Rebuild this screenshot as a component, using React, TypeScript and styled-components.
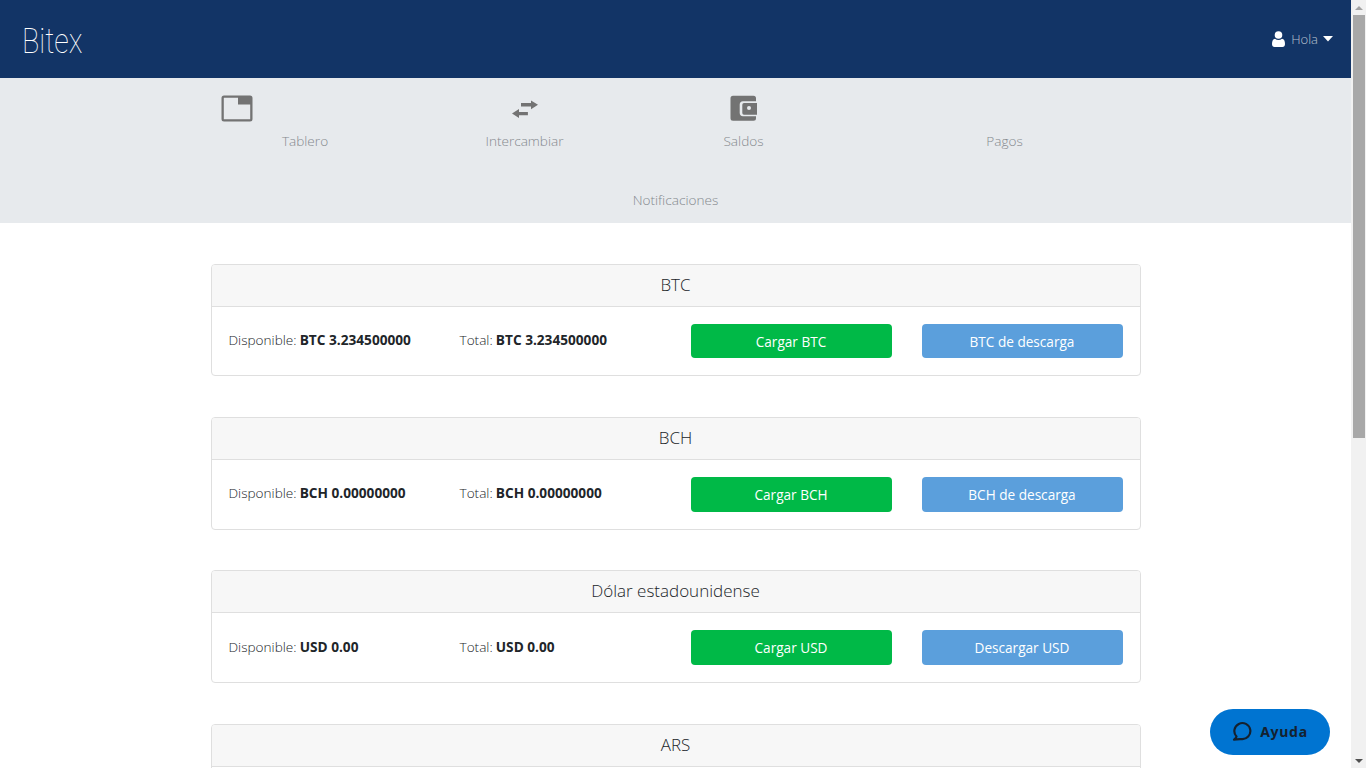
import React from "react";
import styled, { createGlobalStyle } from "styled-components";

const Global = createGlobalStyle`
  body { margin: 0; background: #fff; font-family: "Open Sans", "Liberation Sans", sans-serif; color: #212529; }
  * { box-sizing: border-box; }
`;

const Page = styled.div`
  width: 1351px;
  min-height: 1340px;
`;

const Header = styled.header`
  height: 78px;
  background: #123466;
  display: flex;
  align-items: center;
  justify-content: space-between;
  padding: 0 18px 0 22px;
`;

const Brand = styled.div`
  font-family: "Roboto", "Lato", sans-serif;
  font-weight: 100;
  font-size: 35px;
  line-height: 40px;
  color: #fff;
  margin-top: 5px;
  transform: scaleX(0.82);
  transform-origin: left center;
`;

const UserMenu = styled.div`
  display: flex;
  align-items: center;
  color: rgba(255, 255, 255, 0.7);
  font-size: 13px;
  font-weight: 300;
  margin-top: -1px;
`;

const UserName = styled.span`
  margin: 0 5px 0 6px;
`;

const Nav = styled.nav`
  background: #e7eaed;
  height: 145px;
`;

const NavGrid = styled.div`
  width: 930px;
  margin: 0 auto;
  display: grid;
  grid-template-columns: 189px 188px 188px 272px;
  column-gap: 31px;
  grid-template-rows: 85px 60px;
`;

const NavItem = styled.a<{ $full?: boolean }>`
  display: block;
  grid-column: ${(p) => (p.$full ? "1 / -1" : "auto")};
  color: #85898e;
  font-size: 13.6px;
  font-weight: 300;
  text-align: center;
`;

const NavIcon = styled.div<{ $start?: boolean }>`
  height: 33px;
  margin-top: 17px;
  display: flex;
  justify-content: ${(p) => (p.$start ? "flex-start" : "center")};
  padding-left: ${(p) => (p.$start ? "10px" : "0")};
`;

const NavLabel = styled.div<{ $top?: number }>`
  line-height: 18px;
  margin-top: ${(p) => p.$top ?? 4}px;
`;

const Main = styled.main`
  width: 930px;
  margin: 40.7px auto 0;
  display: flex;
  flex-direction: column;
  gap: 40.85px;
`;

const Card = styled.section`
  border: 1px solid #dfdfdf;
  border-radius: 4px;
  overflow: hidden;
`;

const CardHeader = styled.div`
  height: 42px;
  background: #f7f7f7;
  border-bottom: 1px solid #dfdfdf;
  text-align: center;
  font-size: 17px;
  font-weight: 300;
  line-height: 40px;
  color: #212529;
`;

const CardBody = styled.div`
  padding: 17px;
  display: grid;
  grid-template-columns: repeat(4, 201px);
  column-gap: 30px;
  align-items: center;
`;

const Stat = styled.div`
  font-size: 13.6px;
  font-weight: 300;
  color: #212529;
  margin-top: -3px;
  white-space: nowrap;
`;

const Value = styled.strong`
  font-weight: 700;
  font-size: 13.65px;
  margin-left: -0.4px;
`;

const Button = styled.a<{ $kind: "green" | "blue" }>`
  display: block;
  height: 34.5px;
  line-height: 35.5px;
  border-radius: 4px;
  text-align: center;
  font-size: 13.6px;
  color: #fff;
  background: ${(p) => (p.$kind === "green" ? "#00b947" : "#5b9fdc")};
`;

const Help = styled.div`
  position: fixed;
  left: 1210px;
  top: 709px;
  width: 120px;
  height: 46px;
  padding-bottom: 2px;
  border-radius: 23px;
  background: #0074d1;
  color: #14212f;
  display: flex;
  align-items: center;
  justify-content: center;
  gap: 8px;
  font-family: "Noto Sans", "Open Sans", sans-serif;
  font-weight: 700;
  font-size: 14px;
  letter-spacing: 0.7px;
`;

const Scrollbar = styled.aside`
  position: fixed;
  top: 0;
  right: 0;
  width: 15px;
  height: 768px;
  background: #f1f1f1;
  display: flex;
  flex-direction: column;
`;

const ScrollButton = styled.div<{ $down?: boolean }>`
  height: 15px;
  flex: none;
  display: flex;
  align-items: center;
  justify-content: center;
  &::before {
    content: "";
    width: 0;
    height: 0;
    border-left: 4px solid transparent;
    border-right: 4px solid transparent;
    border-top: ${(p) => (p.$down ? "4px solid #505050" : "none")};
    border-bottom: ${(p) => (p.$down ? "none" : "4px solid #a3a3a3")};
  }
`;

const ScrollThumb = styled.div`
  height: 423px;
  flex: none;
  margin: 0 1px 0 2px;
  background: #a8a8a8;
`;

const ScrollTrack = styled.div`
  flex: 1;
`;

const TableroIcon = () => (
  <svg width="32" height="27" viewBox="0 0 32 27">
    <path fillRule="evenodd" fill="#737373" d="M3 0.5h26a2.5 2.5 0 0 1 2.5 2.5v21a2.5 2.5 0 0 1-2.5 2.5H3A2.5 2.5 0 0 1 0.5 24V3A2.5 2.5 0 0 1 3 0.5ZM2.8 3V24.2H29.2V9.5H17V2.8H3Z" />
  </svg>
);

const ExchangeIcon = () => (
  <svg width="28" height="27" viewBox="0 0 28 27">
    <path fill="#737373" d="M10 8.1H20V5.5L27 9.8L20 14.2V11.6H10Z" />
    <path fill="#737373" d="M16.9 16.9H8V14.1L1 18.5L8 23V20.3H16.9Z" />
  </svg>
);

const WalletIcon = () => (
  <svg width="27" height="27" viewBox="0 0 27 27">
    <path fill="#737373" d="M3 0.7H23.5A2.5 2.5 0 0 1 26 3.2V6.3H13A3.5 3.5 0 0 0 9.7 9.8V17.8A3.5 3.5 0 0 0 13 21.3H26V23.2A2.5 2.5 0 0 1 23.5 25.7H3A2.5 2.5 0 0 1 .5 23.2V3.2A2.5 2.5 0 0 1 3 .7Z" />
    <path fillRule="evenodd" fill="#737373" d="M14 8H27V19.7H14A1.7 1.7 0 0 1 12.3 18V9.7A1.7 1.7 0 0 1 14 8ZM19 11a2 2 0 1 0 0 4a2 2 0 0 0 0-4Z" />
  </svg>
);

const UserIcon = () => (
  <svg width="13" height="16" viewBox="0 0 13 16">
    <circle cx="6.5" cy="4" r="3.8" fill="#fff" />
    <path fill="#fff" d="M0 13c0-3 1-5 3-5.2 1 .8 2.2 1.2 3.5 1.2s2.5-.4 3.5-1.2c2 .2 3 2.2 3 5.2 0 2-1 3-2.5 3h-8C1 16 0 15 0 13Z" />
  </svg>
);

const Caret = () => (
  <svg width="10" height="6" viewBox="0 0 10 6">
    <path fill="#fff" d="M0 0h10L5 5.5Z" />
  </svg>
);

const ChatIcon = () => (
  <svg width="20" height="20" viewBox="0 0 20 20" fill="none">
    <path stroke="#14212f" strokeWidth="2.2" strokeLinecap="round" strokeLinejoin="round" d="M4.5 15.5A8 8 0 1 1 9.5 18c-2 .2-4.5.5-7.5.7 1.2-.8 2.2-1.8 2.5-3.2Z" />
  </svg>
);

type Row = { title: string; code: string; avail: string; load: string; unload: string };

const rows: Row[] = [
  { title: "BTC", code: "BTC", avail: "3.234500000", load: "Cargar BTC", unload: "BTC de descarga" },
  { title: "BCH", code: "BCH", avail: "0.00000000", load: "Cargar BCH", unload: "BCH de descarga" },
  { title: "Dólar estadounidense", code: "USD", avail: "0.00", load: "Cargar USD", unload: "Descargar USD" },
  { title: "ARS", code: "ARS", avail: "0.00", load: "Cargar ARS", unload: "Descargar ARS" },
];

export default function App() {
  return (
    <Page>
      <Global />
      <Header>
        <Brand>Bitex</Brand>
        <UserMenu>
          <UserIcon />
          <UserName>Hola</UserName>
          <Caret />
        </UserMenu>
      </Header>
      <Nav>
        <NavGrid>
          <NavItem>
            <NavIcon $start><TableroIcon /></NavIcon>
            <NavLabel>Tablero</NavLabel>
          </NavItem>
          <NavItem>
            <NavIcon><ExchangeIcon /></NavIcon>
            <NavLabel>Intercambiar</NavLabel>
          </NavItem>
          <NavItem>
            <NavIcon><WalletIcon /></NavIcon>
            <NavLabel>Saldos</NavLabel>
          </NavItem>
          <NavItem>
            <NavIcon />
            <NavLabel>Pagos</NavLabel>
          </NavItem>
          <NavItem $full>
            <NavLabel $top={28}>Notificaciones</NavLabel>
          </NavItem>
        </NavGrid>
      </Nav>
      <Main>
        {rows.map((r) => (
          <Card key={r.code}>
            <CardHeader>{r.title}</CardHeader>
            <CardBody>
              <Stat>Disponible: <Value>{r.code} {r.avail}</Value></Stat>
              <Stat>Total: <Value>{r.code} {r.avail}</Value></Stat>
              <Button $kind="green">{r.load}</Button>
              <Button $kind="blue">{r.unload}</Button>
            </CardBody>
          </Card>
        ))}
      </Main>
      <Help>
        <ChatIcon />
        <span>Ayuda</span>
      </Help>
      <Scrollbar>
        <ScrollButton />
        <ScrollThumb />
        <ScrollTrack />
        <ScrollButton $down />
      </Scrollbar>
    </Page>
  );
}
